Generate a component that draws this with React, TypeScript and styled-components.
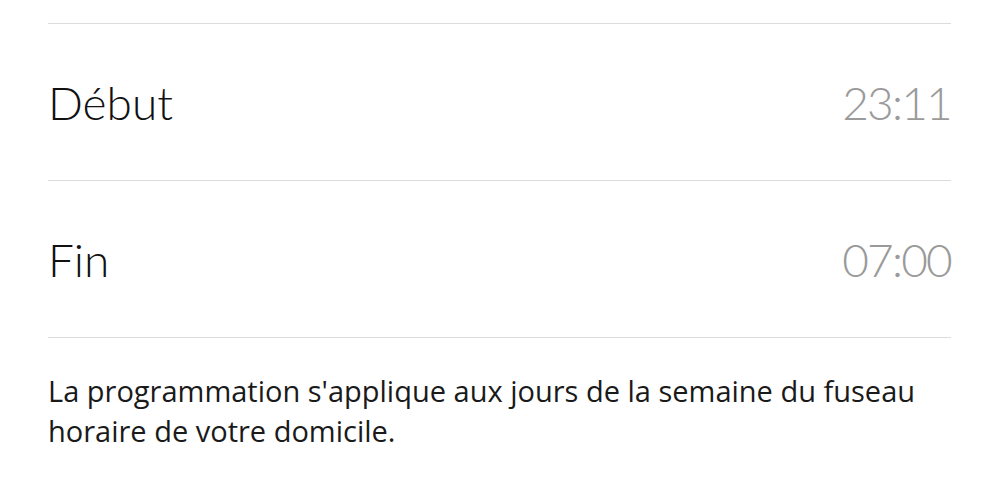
import React from "react";
import styled, { createGlobalStyle } from "styled-components";

const Global = createGlobalStyle`
  html, body { margin: 0; padding: 0; background: #fff; }
  body { font-family: Lato, "Open Sans", sans-serif; }
`;

const Page = styled.div`
  width: 1000px;
  height: 500px;
  box-sizing: border-box;
  padding: 23px 49px 0 48px;
  overflow: hidden;
`;

const List = styled.div`
  display: flex;
  flex-direction: column;
  border-top: 1px solid #dcdcdc;
`;

const Row = styled.div`
  display: flex;
  align-items: center;
  justify-content: space-between;
  height: 156px;
  border-bottom: 1px solid #dcdcdc;
`;

const Label = styled.span`
  font-size: 46px;
  font-weight: 300;
  color: #111;
`;

const Value = styled.span`
  font-size: 46px;
  font-weight: 300;
  color: #9a9a9a;
  letter-spacing: -1.8px;
`;

const Note = styled.p`
  margin: 33px 0 0;
  font-family: "Open Sans", sans-serif;
  font-size: 29px;
  line-height: 40px;
  color: #1a1a1a;
  max-width: 903px;
`;

export default function App() {
  return (
    <>
      <Global />
      <Page>
        <List>
          <Row>
            <Label>Début</Label>
            <Value>23:11</Value>
          </Row>
          <Row>
            <Label>Fin</Label>
            <Value>07:00</Value>
          </Row>
        </List>
        <Note>
          La programmation s'applique aux jours de la semaine du fuseau horaire de votre domicile.
        </Note>
      </Page>
    </>
  );
}
